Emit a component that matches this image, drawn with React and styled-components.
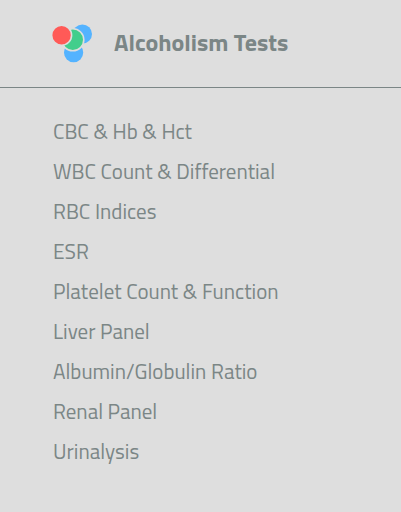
import React from 'react';
import styled, { createGlobalStyle } from 'styled-components';

const tests = [
    'CBC & Hb & Hct',
    'WBC Count & Differential',
    'RBC Indices',
    'ESR',
    'Platelet Count & Function',
    'Liver Panel',
    'Albumin/Globulin Ratio',
    'Renal Panel',
    'Urinalysis',
];

const CirclesLogo = () => (
    <Logo viewBox="0 0 42 40" aria-hidden="true">
        <circle cx="30.4" cy="11" r="9.6" fill="#54b3ff" />
        <circle cx="21.6" cy="29.6" r="9.6" fill="#54b3ff" />
        <circle cx="20.8" cy="16.8" r="11" fill="#42ce8c" stroke="#dedede" strokeWidth="1.6" />
        <circle cx="9.6" cy="12.2" r="10" fill="#ff5a57" stroke="#dedede" strokeWidth="1.6" />
    </Logo>
);

const App = () => (
    <Panel>
        <GlobalStyle />
        <Header>
            <CirclesLogo />
            <Title>Alcoholism Tests</Title>
        </Header>
        <List>
            {tests.map((test) => (
                <Item key={test}>{test}</Item>
            ))}
        </List>
    </Panel>
);

export default App;

const GlobalStyle = createGlobalStyle`
    body {
        margin: 0;
        background: #dedede;
        color: #7b8686;
        font-family: 'Titillium Web', Roboto, sans-serif;
    }
`;

const Panel = styled.section`
    width: 100%;
`;

const Header = styled.header`
    display: flex;
    align-items: flex-start;
    gap: 20px;
    padding: 23px 52px 24px;
    border-bottom: 1px solid #7b8686;
`;

const Logo = styled.svg`
    flex: none;
    width: 42px;
    height: 40px;
`;

const Title = styled.h1`
    margin: 0;
    font-size: 24px;
    line-height: 38px;
    font-weight: 700;
    white-space: nowrap;
`;

const List = styled.ul`
    margin: 0;
    padding: 23px 53px;
    list-style: none;
`;

const Item = styled.li`
    font-size: 21px;
    line-height: 40px;
    font-weight: 400;
    white-space: nowrap;
`;
